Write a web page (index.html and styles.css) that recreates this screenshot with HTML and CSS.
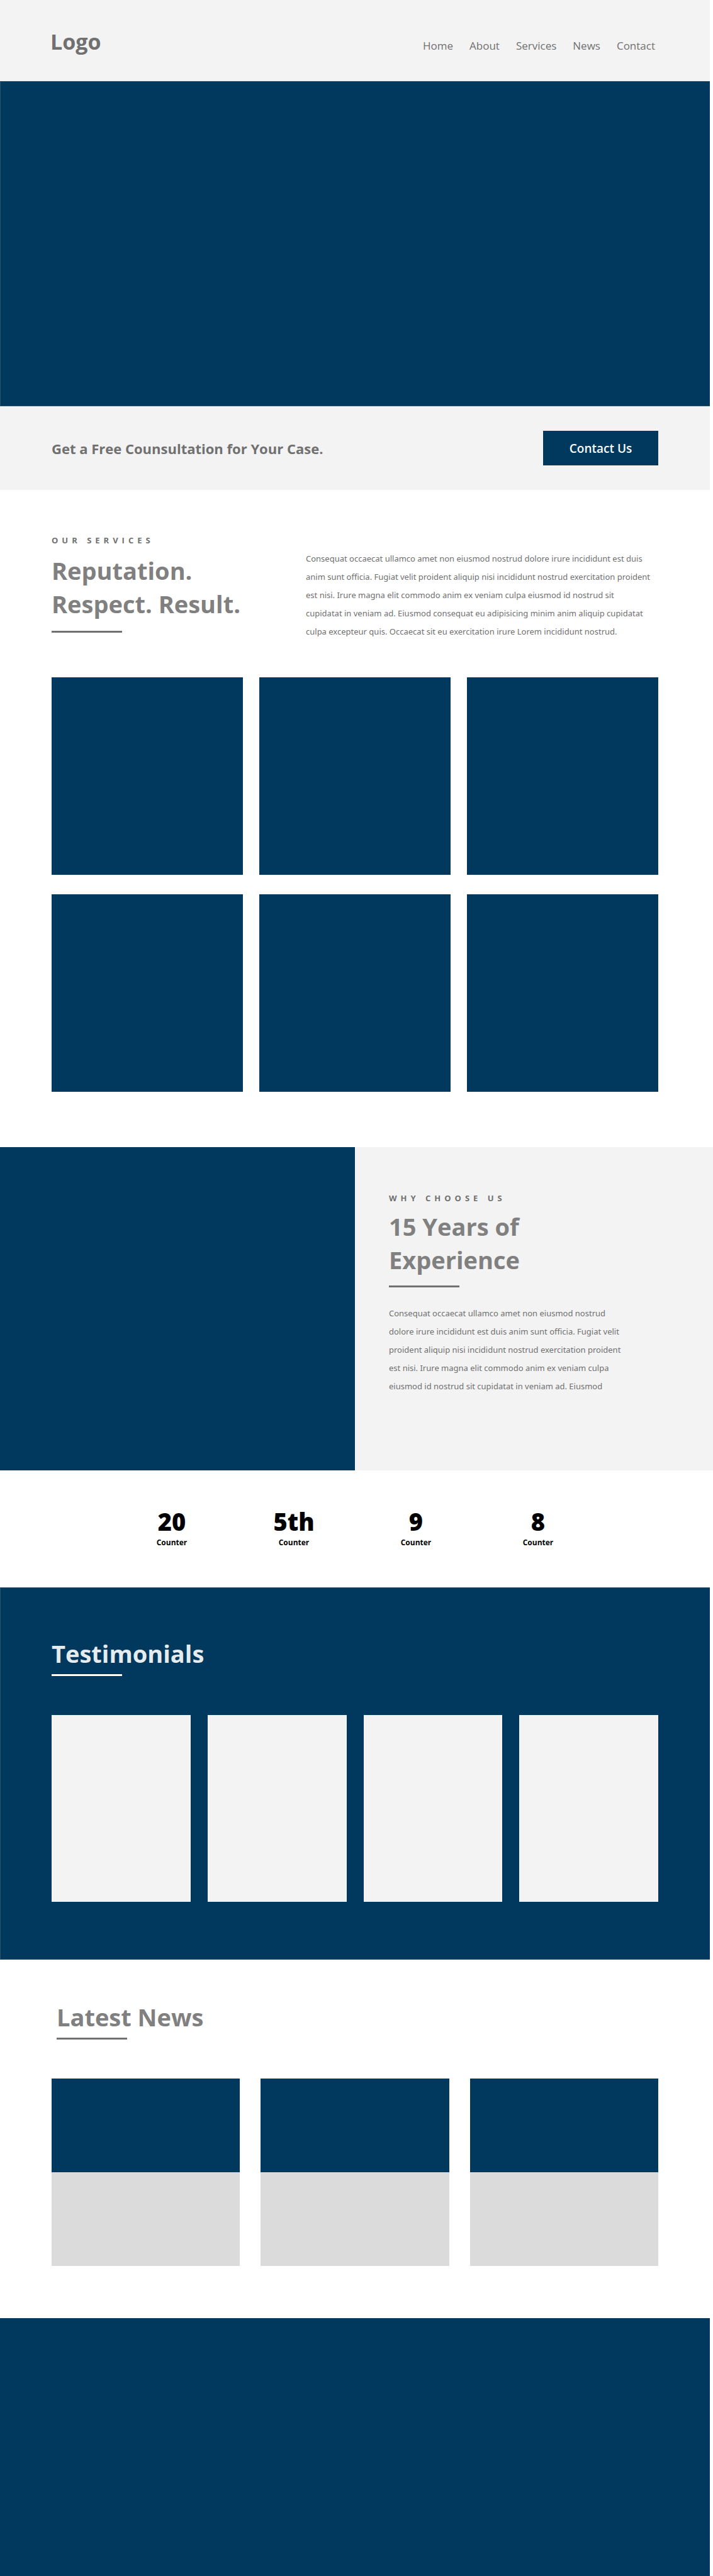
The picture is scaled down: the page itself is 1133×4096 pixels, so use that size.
FILE: index.html
```html
<!DOCTYPE html>
<html lang="en">
<head>
<meta charset="utf-8">
<title>Law Firm</title>
<meta name="viewport" content="width=device-width, initial-scale=1">
<link rel="stylesheet" href="styles.css">
</head>
<body>
<header class="header band">
  <a class="logo" href="#">Logo</a>
  <nav class="nav">
    <a href="#home">Home</a>
    <a href="#about">About</a>
    <a href="#services">Services</a>
    <a href="#news">News</a>
    <a href="#contact">Contact</a>
  </nav>
</header>
<main>
  <section class="hero band" id="home"></section>
  <section class="cta band" id="contact">
    <h2 class="cta-title">Get a Free Counsultation for Your Case.</h2>
    <button class="cta-button" type="button">Contact Us</button>
  </section>
  <section class="services" id="services">
    <div class="services-intro">
      <div>
        <p class="label">OUR SERVICES</p>
        <h2 class="title">Reputation.<br>Respect. Result.</h2>
        <div class="rule"></div>
      </div>
      <p class="copy services-copy">Consequat occaecat ullamco amet non eiusmod nostrud dolore irure incididunt est duis<br>anim sunt officia. Fugiat velit proident aliquip nisi incididunt nostrud exercitation proident<br>est nisi. Irure magna elit commodo anim ex veniam culpa eiusmod id nostrud sit<br>cupidatat in veniam ad. Eiusmod consequat eu adipisicing minim anim aliquip cupidatat<br>culpa excepteur quis. Occaecat sit eu exercitation irure Lorem incididunt nostrud.</p>
    </div>
    <div class="service-grid">
      <div class="service-card"></div>
      <div class="service-card"></div>
      <div class="service-card"></div>
      <div class="service-card"></div>
      <div class="service-card"></div>
      <div class="service-card"></div>
    </div>
  </section>
  <section class="about" id="about">
    <div class="about-picture"></div>
    <div class="about-text">
      <p class="label">WHY CHOOSE US</p>
      <h2 class="title">15 Years of<br>Experience</h2>
      <div class="rule"></div>
      <p class="copy">Consequat occaecat ullamco amet non eiusmod nostrud<br>dolore irure incididunt est duis anim sunt officia. Fugiat velit<br>proident aliquip nisi incididunt nostrud exercitation proident<br>est nisi. Irure magna elit commodo anim ex veniam culpa<br>eiusmod id nostrud sit cupidatat in veniam ad. Eiusmod</p>
    </div>
  </section>
  <section class="counters band">
    <div class="counter"><strong class="counter-value">20</strong><span>Counter</span></div>
    <div class="counter"><strong class="counter-value">5th</strong><span>Counter</span></div>
    <div class="counter"><strong class="counter-value">9</strong><span>Counter</span></div>
    <div class="counter"><strong class="counter-value">8</strong><span>Counter</span></div>
  </section>
  <section class="testimonials band">
    <h2 class="title">Testimonials</h2>
    <div class="rule"></div>
    <div class="testimonial-grid">
      <div class="testimonial-card"></div>
      <div class="testimonial-card"></div>
      <div class="testimonial-card"></div>
      <div class="testimonial-card"></div>
    </div>
  </section>
  <section class="news" id="news">
    <div class="news-head">
      <h2 class="title">Latest News</h2>
      <div class="rule"></div>
    </div>
    <div class="news-grid">
      <article class="news-card"><div class="news-picture"></div><div class="news-body"></div></article>
      <article class="news-card"><div class="news-picture"></div><div class="news-body"></div></article>
      <article class="news-card"><div class="news-picture"></div><div class="news-body"></div></article>
    </div>
  </section>
</main>
<footer class="footer band"></footer>
</body>
</html>
```
FILE: styles.css
```css
:root {
  --navy: #00395d;
  --light: #f3f3f3;
  --gray: #707070;
  --edge: #2f526b;
}

* {
  box-sizing: border-box;
  margin: 0;
}

body {
  background: #fff;
  color: var(--gray);
  font-family: "Open Sans", "Noto Sans", sans-serif;
  font-size: 13px;
}

.band {
  margin-right: 5px;
}

.header {
  display: flex;
  justify-content: space-between;
  align-items: baseline;
  padding: 42px 87px 39px 80px;
  background: var(--light);
}

.logo {
  color: inherit;
  font-size: 34px;
  font-weight: 700;
  line-height: 48px;
  text-decoration: none;
}

.nav {
  display: flex;
  gap: 26px;
}

.nav a {
  color: inherit;
  font-size: 17px;
  line-height: 24px;
  text-decoration: none;
}

.hero {
  min-height: 517px;
  border: 1px solid var(--edge);
  border-right: 0;
  background: var(--navy);
}

.cta {
  display: flex;
  justify-content: space-between;
  align-items: center;
  min-height: 133px;
  padding: 0 82px;
  background: var(--light);
}

.cta-title {
  font-size: 22px;
  font-weight: 700;
  line-height: 32px;
}

.cta-button {
  width: 183px;
  height: 55px;
  border: 0;
  background: var(--navy);
  color: #fff;
  font: 600 19px/28px "Open Sans", "Noto Sans", sans-serif;
}

.services {
  padding: 70px 87px 88px 82px;
}

.services-intro {
  display: grid;
  grid-template-columns: 404px 1fr;
  margin-bottom: 58px;
}

.label {
  margin-bottom: 12px;
  font-size: 13px;
  font-weight: 700;
  letter-spacing: 6px;
  line-height: 20px;
}

.title {
  color: #808080;
  font-size: 38px;
  font-weight: 700;
  line-height: 53px;
}

.rule {
  width: 112px;
  height: 3px;
  margin-top: 16px;
  background: var(--gray);
}

.copy {
  font-family: "Noto Sans", "Open Sans", sans-serif;
  line-height: 29px;
  white-space: nowrap;
}

.services-copy {
  padding-top: 25px;
}

.service-grid {
  display: grid;
  grid-template-columns: repeat(3, 1fr);
  gap: 31px 26px;
}

.service-card {
  min-height: 314px;
  background: var(--navy);
}

.about {
  display: grid;
  grid-template-columns: 564px 1fr;
  min-height: 514px;
}

.about-picture {
  background: var(--navy);
}

.about-text {
  padding: 71px 54px;
  background: var(--light);
}

.about-text .label {
  margin-bottom: 9px;
}

.about-text .rule {
  margin: 14px 0 27px;
}

.counters {
  display: grid;
  grid-template-columns: repeat(4, 194px);
  justify-content: center;
  padding: 57px 0 61px;
  color: #000;
}

.counter {
  display: flex;
  flex-direction: column;
  align-items: center;
  font-size: 12px;
  font-weight: 700;
  line-height: 20px;
}

.counter-value {
  font-size: 38px;
  line-height: 48px;
}

.testimonials {
  padding: 78px 82px 91px 81px;
  border: 1px solid var(--edge);
  border-right: 0;
  background: var(--navy);
}

.testimonials .title {
  color: #e5ebef;
}

.testimonials .rule {
  margin-top: 6px;
  background: #fff;
}

.testimonial-grid {
  display: grid;
  grid-template-columns: repeat(4, 1fr);
  gap: 27px;
  margin-top: 62px;
}

.testimonial-card {
  min-height: 297px;
  background: var(--light);
}

.news {
  padding: 65px 87px 83px 82px;
}

.news-head {
  padding-left: 8px;
}

.news-head .rule {
  margin-top: 6px;
}

.news-grid {
  display: grid;
  grid-template-columns: repeat(3, 1fr);
  gap: 33px;
  margin-top: 62px;
}

.news-picture {
  min-height: 149px;
  background: var(--navy);
}

.news-body {
  min-height: 149px;
  background: #dbdbdb;
}

.footer {
  min-height: 410px;
  background: var(--navy);
}
```
